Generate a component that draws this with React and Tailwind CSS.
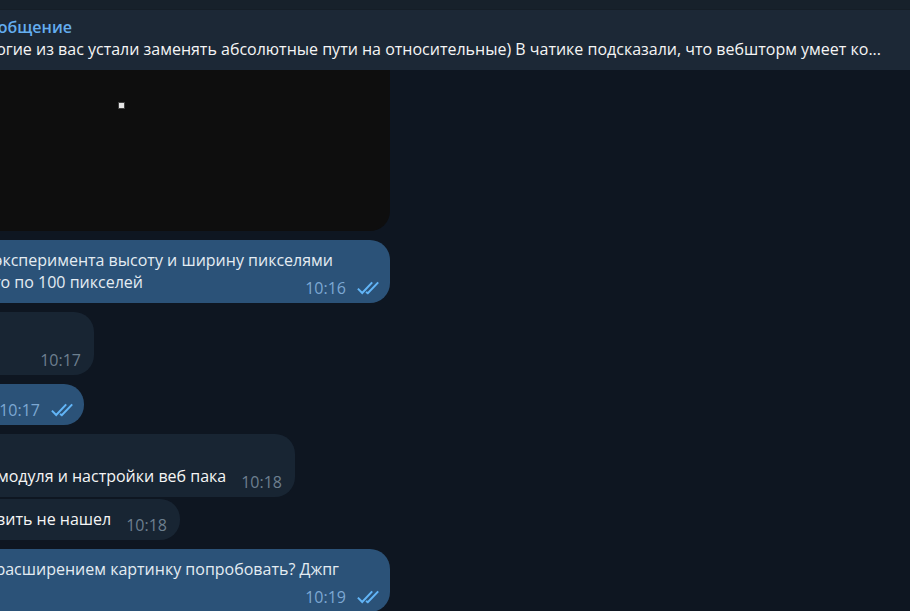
import React from "react";
import clsx from "clsx";

function Ticks() {
  return (
    <svg className="ml-[11px] h-4 w-[22px] shrink-0" viewBox="0 0 22 16" fill="none" stroke="#62b5f7" strokeWidth="2" aria-hidden="true">
      <path d="M0.9 8.6 L5.2 13 L15.2 2.4" />
      <path d="M9 12 L10.8 13.2 L21.2 2.4" />
    </svg>
  );
}

function Meta({ time, own }) {
  return (
    <div className={clsx("flex shrink-0 items-center leading-[22px]", own ? "pr-[11px] text-[#7da8d3]" : "pr-[13px] text-[#6d7f8f]")}>
      <time>{time}</time>
      {own && <Ticks />}
    </div>
  );
}

function Bubble({ own, className, children }) {
  return (
    <article className={clsx("flex rounded-r-[20px]", own ? "bg-[#2b5278] text-[#e4ecf2]" : "bg-[#182533]", className)}>
      {children}
    </article>
  );
}

export default function App() {
  return (
    <div className="h-screen overflow-hidden bg-[#0e1621] font-['Open_Sans','Noto_Sans',sans-serif] text-[16px] leading-[22px] text-[#f5f5f5]">
      <div className="h-[10px] border-b border-[#151e27] bg-[#17212b]" />
      <header className="flex h-[60px] flex-col bg-[#1c2836] pt-[6px]">
        <div className="flex w-[72px] justify-end font-semibold whitespace-nowrap text-[#64aef0]">общение</div>
        <div className="flex justify-end pr-[29px] whitespace-nowrap">
          огие из вас устали заменять абсолютные пути на относительные) В чатике подсказали, что вебшторм умеет ко...
        </div>
      </header>
      <main className="flex flex-col items-start">
        <figure className="h-[161px] w-[390px] rounded-br-[20px] bg-[#0e0e0e] pt-[33px] pl-[119px]">
          <div className="size-[5px] bg-[#e6e6e6] outline outline-[#404040]" />
        </figure>
        <Bubble own className="mt-[9px] h-[63px] w-[390px] items-end">
          <div className="flex min-w-0 flex-1 flex-col pb-1">
            <p className="flex w-[333px] justify-end whitespace-nowrap">эксперимента высоту и ширину пикселями</p>
            <div className="flex items-end justify-between">
              <p className="flex w-[143px] justify-end pb-[6px] whitespace-nowrap">го по 100 пикселей</p>
              <Meta time="10:16" own />
            </div>
          </div>
        </Bubble>
        <Bubble className="mt-[9px] h-[63px] w-[94px] items-end justify-end pb-1">
          <Meta time="10:17" />
        </Bubble>
        <Bubble own className="mt-[9px] h-[41px] w-[84px] items-end justify-end pb-1">
          <Meta time="10:17" own />
        </Bubble>
        <Bubble className="mt-[9px] h-[63px] w-[295px] items-end justify-end gap-[15px] pb-1">
          <p className="pb-[6px] whitespace-nowrap">модуля и настройки веб пака</p>
          <Meta time="10:18" />
        </Bubble>
        <Bubble className="mt-[2px] h-[41px] w-[180px] items-end justify-end gap-[15px] pb-1">
          <p className="pb-[6px] whitespace-nowrap">вить не нашел</p>
          <Meta time="10:18" />
        </Bubble>
        <Bubble own className="mt-[9px] h-[63px] w-[390px] flex-col justify-between pt-[9px] pb-1">
          <p className="flex w-[339px] justify-end whitespace-nowrap">расширением картинку попробовать? Джпг</p>
          <div className="flex justify-end">
            <Meta time="10:19" own />
          </div>
        </Bubble>
      </main>
    </div>
  );
}
